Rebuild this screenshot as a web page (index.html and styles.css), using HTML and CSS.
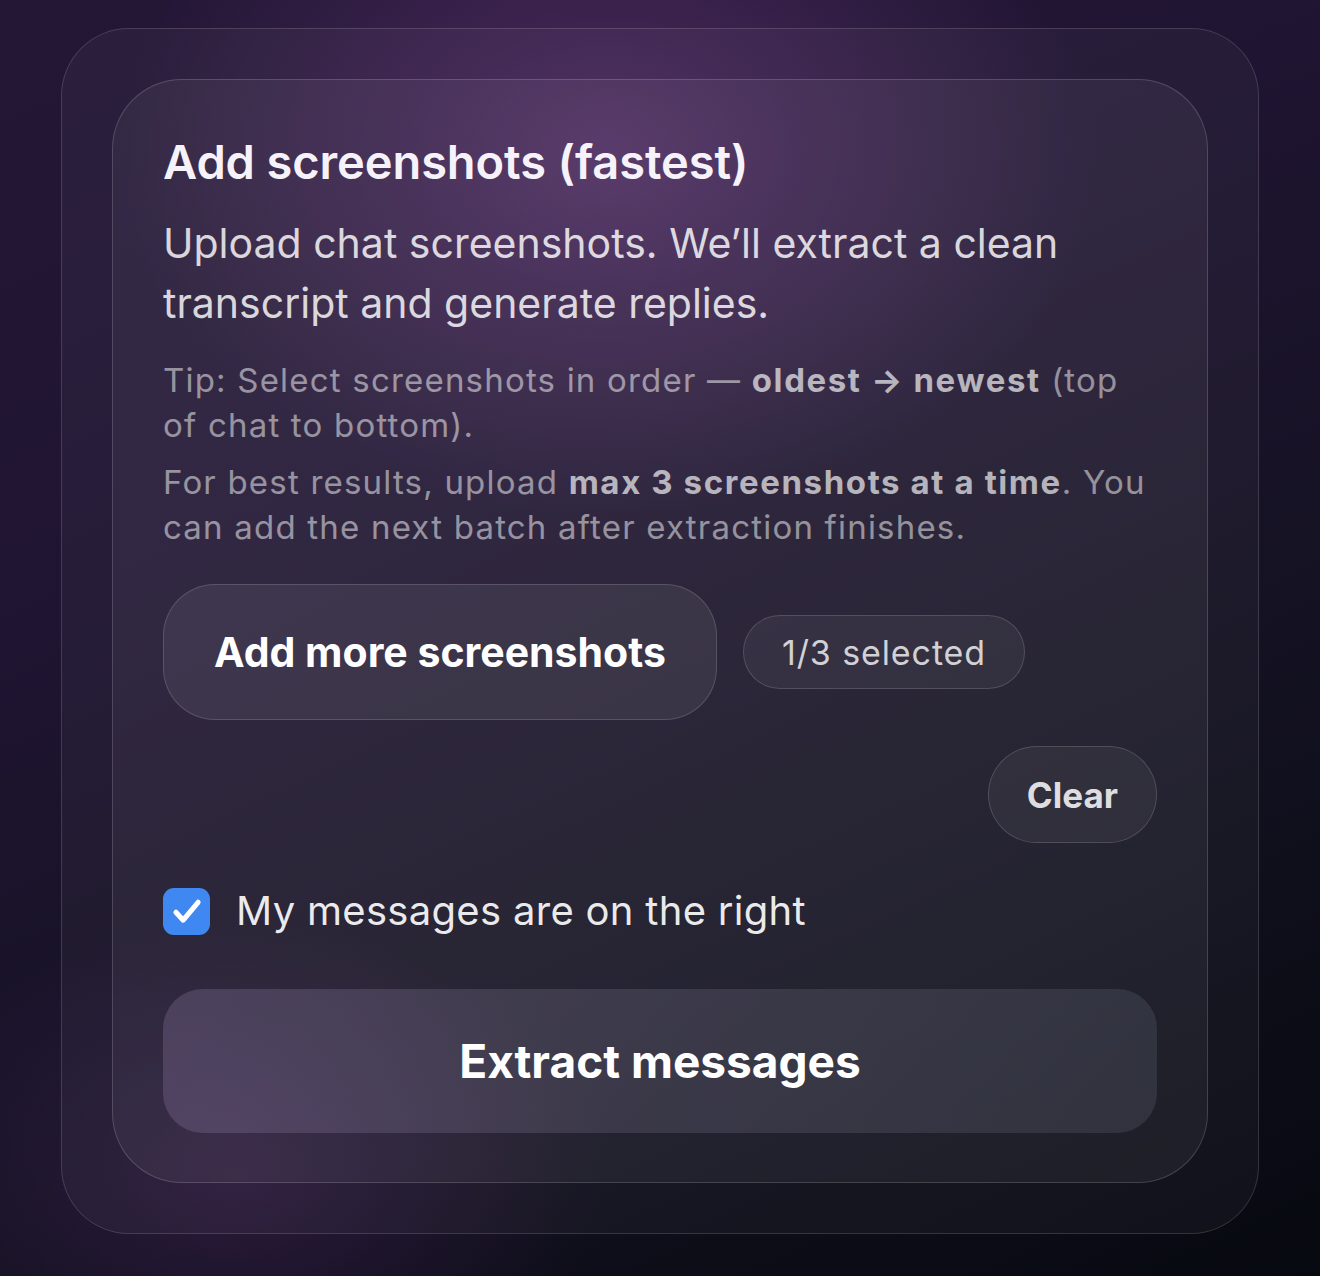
FILE: index.html
```html
<!DOCTYPE html>
<html lang="en">
<head>
<meta charset="utf-8">
<title>Add screenshots</title>
<link rel="stylesheet" href="styles.css">
</head>
<body>
<div class="page">
  <section class="outer-card">
    <div class="inner-card">
      <h1 class="title">Add screenshots (fastest)</h1>
      <p class="lead">Upload chat screenshots. We’ll extract a clean transcript and generate replies.</p>
      <p class="tip">Tip: Select screenshots in order — <b>oldest → newest</b> (top of chat to bottom).</p>
      <p class="tip tip-second">For best results, upload <b>max 3 screenshots at a time</b>. You can add the next batch after extraction finishes.</p>
      <div class="actions">
        <button class="btn-add" type="button">Add more screenshots</button>
        <span class="count-pill">1/3 selected</span>
        <button class="btn-clear" type="button">Clear</button>
      </div>
      <label class="check-row">
        <span class="checkbox">
          <svg viewBox="0 0 24 24" width="38" height="38" aria-hidden="true"><path d="M5 12.8l4.6 5L19 6.5" fill="none" stroke="#fff" stroke-width="3.2" stroke-linecap="round" stroke-linejoin="round"/></svg>
        </span>
        <span class="check-label">My messages are on the right</span>
      </label>
      <button class="btn-extract" type="button">Extract messages</button>
    </div>
  </section>
</div>
</body>
</html>
```

FILE: styles.css
```css
* { box-sizing: border-box; }
html, body { margin: 0; padding: 0; }
body {
  width: 1320px;
  height: 1276px;
  overflow: hidden;
  font-family: Inter, "Noto Sans", sans-serif;
  color: #fff;
  background:
    radial-gradient(ellipse 700px 520px at 46% 12%, rgba(110, 60, 130, 0.55), rgba(110, 60, 130, 0) 70%),
    radial-gradient(ellipse 520px 360px at 18% 92%, rgba(80, 40, 100, 0.4), rgba(80, 40, 100, 0) 70%),
    linear-gradient(155deg, #241736 0%, #1f1431 35%, #141222 65%, #070910 100%);
}
.page {
  padding: 28px 61px 42px;
}
.outer-card {
  border: 1.5px solid rgba(255, 255, 255, 0.14);
  border-radius: 68px;
  padding: 50px;
  background: rgba(255, 255, 255, 0.035);
}
.inner-card {
  border: 1.5px solid rgba(255, 255, 255, 0.16);
  border-radius: 70px;
  padding: 53px 50px 49px;
  background: rgba(255, 255, 255, 0.05);
}
.title {
  margin: 0;
  font-size: 47px;
  line-height: 58px;
  font-weight: 600;
  color: #f6f2fa;
  letter-spacing: -0.1px;
}
.lead {
  margin: 22px 0 0;
  font-size: 41px;
  line-height: 60px;
  color: rgba(255, 255, 255, 0.82);
  font-weight: 400;
  letter-spacing: 0;
}
.tip {
  margin: 25px 0 0;
  font-size: 33px;
  line-height: 45px;
  color: rgba(255, 255, 255, 0.5);
  letter-spacing: 1.2px;
}
.tip b {
  font-weight: 700;
  color: rgba(255, 255, 255, 0.66);
  letter-spacing: 1.6px;
}
.tip-second { margin-top: 12px; }
.actions {
  margin-top: 34px;
  display: flex;
  flex-wrap: wrap;
  align-items: center;
  gap: 26px;
}
.btn-add {
  height: 136px;
  padding: 0 50px;
  border-radius: 52px;
  border: 1.5px solid rgba(255, 255, 255, 0.15);
  background: rgba(255, 255, 255, 0.07);
  color: #fff;
  font-family: inherit;
  font-size: 41px;
  font-weight: 700;
}
.count-pill {
  height: 74px;
  padding: 0 38px;
  display: inline-flex;
  align-items: center;
  border-radius: 37px;
  border: 1.5px solid rgba(255, 255, 255, 0.15);
  background: rgba(255, 255, 255, 0.05);
  color: rgba(255, 255, 255, 0.78);
  font-size: 34px;
  letter-spacing: 0.9px;
}
.btn-clear {
  margin-left: auto;
  height: 97px;
  padding: 0 38px;
  border-radius: 49px;
  border: 1.5px solid rgba(255, 255, 255, 0.15);
  background: rgba(255, 255, 255, 0.05);
  color: rgba(255, 255, 255, 0.85);
  font-family: inherit;
  font-size: 35px;
  font-weight: 700;
}
.check-row {
  margin-top: 40px;
  display: flex;
  align-items: center;
  gap: 26px;
}
.checkbox {
  width: 47px;
  height: 47px;
  border-radius: 11px;
  background: #3f88f2;
  display: inline-flex;
  align-items: center;
  justify-content: center;
}
.check-label {
  font-size: 40px;
  line-height: 56px;
  color: rgba(255, 255, 255, 0.92);
  letter-spacing: 0.3px;
}
.btn-extract {
  display: block;
  width: 100%;
  margin-top: 50px;
  height: 144px;
  border: none;
  border-radius: 40px;
  background: linear-gradient(100deg, rgba(165, 145, 190, 0.24) 0%, rgba(150, 145, 170, 0.2) 50%, rgba(135, 145, 160, 0.17) 100%);
  color: #fff;
  font-family: inherit;
  font-size: 46px;
  font-weight: 700;
}
```
